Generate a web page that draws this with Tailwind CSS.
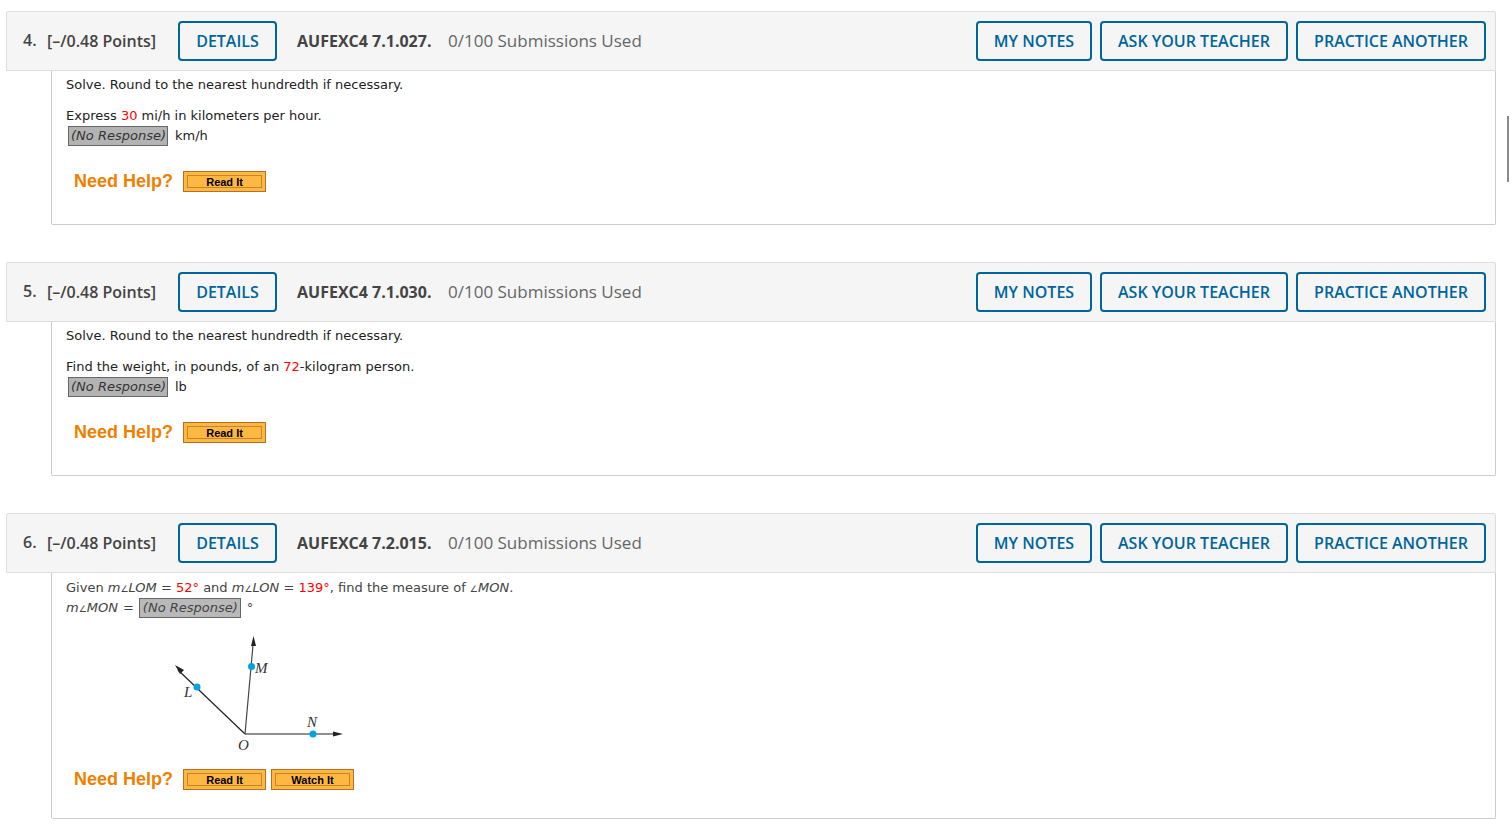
<!DOCTYPE html>
<html lang="en">
<head>
  <meta charset="UTF-8" />
  <meta name="viewport" content="width=device-width, initial-scale=1" />
  <title>Assignment</title>
  <script src="https://cdn.jsdelivr.net/npm/@tailwindcss/browser@4"></script>
</head>
<body class="bg-white h-[831px] overflow-hidden relative font-['Open_Sans',sans-serif]">

  <!-- scrollbar thumb -->
  <div class="absolute left-[1507px] top-[116px] w-[2px] h-[66px] bg-[#8a8a8a]"></div>

  <main class="pt-[11px] pl-[6px] pr-[16px]">

    <!-- question 4 -->
    <section class="mb-[37px]">
      <header class="h-[60px] bg-[#f5f5f5] border border-[#dddddd] rounded-t-[2px] flex items-center pl-[16px] pr-[9px] text-[#444444]">
        <span class="w-[24px] text-[16px] font-semibold -mt-[2px]">4.</span>
        <span class="w-[131px] text-[16px] font-semibold">[–/0.48 Points]</span>
        <button class="h-[40px] w-[99px] border-2 border-[#00659c] rounded-[4px] text-[#00659c] text-[16px] font-semibold">DETAILS</button>
        <span class="ml-[20px] w-[151px] text-[16px] font-bold">AUFEXC4 7.1.027.</span>
        <span class="text-[17px] text-[#666666]">0/100 Submissions Used</span>
        <div class="ml-auto flex gap-[8px]">
          <button class="h-[40px] w-[116px] border-2 border-[#00659c] rounded-[4px] text-[#00659c] text-[16px] font-semibold">MY NOTES</button>
          <button class="h-[40px] w-[188px] border-2 border-[#00659c] rounded-[4px] text-[#00659c] text-[16px] font-semibold">ASK YOUR TEACHER</button>
          <button class="h-[40px] w-[190px] border-2 border-[#00659c] rounded-[4px] text-[#00659c] text-[16px] font-semibold">PRACTICE ANOTHER</button>
        </div>
      </header>
      <div class="ml-[45px] h-[154px] border-l border-r border-b border-[#cccccc] rounded-b-[2px] pl-[14px] font-['DejaVu_Sans',sans-serif] text-[13px] text-[#222222]">
        <p class="pt-[6px] leading-[16px]">Solve. Round to the nearest hundredth if necessary.</p>
        <p class="mt-[15px] leading-[16px]">Express <span class="text-[#ff0000]">30</span> mi/h in kilometers per hour.</p>
        <div class="mt-[2px] ml-[2px] flex items-center h-[20px]">
          <span class="h-[20px] w-[100px] bg-[#b3b3b3] border border-[#666666] italic text-[#333333] leading-[18px] pl-[2px]">(No Response)</span>
          <span class="ml-[7px]">km/h</span>
        </div>
        <div class="mt-[25px] ml-[8px] flex items-center h-[21px]">
          <span class="font-['Liberation_Sans',sans-serif] font-bold text-[18px] text-[#ee7f00]">Need Help?</span>
          <button class="ml-[10px] h-[21px] w-[83px] bg-[#fdb843] border border-[#b86f1f] p-[3px] flex">
            <span class="flex-1 border border-[#c98428] text-black font-['Liberation_Sans',sans-serif] font-bold text-[11px] leading-[12px]">Read It</span>
          </button>
        </div>
      </div>
    </section>

    <!-- question 5 -->
    <section class="mb-[37px]">
      <header class="h-[60px] bg-[#f5f5f5] border border-[#dddddd] rounded-t-[2px] flex items-center pl-[16px] pr-[9px] text-[#444444]">
        <span class="w-[24px] text-[16px] font-semibold -mt-[2px]">5.</span>
        <span class="w-[131px] text-[16px] font-semibold">[–/0.48 Points]</span>
        <button class="h-[40px] w-[99px] border-2 border-[#00659c] rounded-[4px] text-[#00659c] text-[16px] font-semibold">DETAILS</button>
        <span class="ml-[20px] w-[151px] text-[16px] font-bold">AUFEXC4 7.1.030.</span>
        <span class="text-[17px] text-[#666666]">0/100 Submissions Used</span>
        <div class="ml-auto flex gap-[8px]">
          <button class="h-[40px] w-[116px] border-2 border-[#00659c] rounded-[4px] text-[#00659c] text-[16px] font-semibold">MY NOTES</button>
          <button class="h-[40px] w-[188px] border-2 border-[#00659c] rounded-[4px] text-[#00659c] text-[16px] font-semibold">ASK YOUR TEACHER</button>
          <button class="h-[40px] w-[190px] border-2 border-[#00659c] rounded-[4px] text-[#00659c] text-[16px] font-semibold">PRACTICE ANOTHER</button>
        </div>
      </header>
      <div class="ml-[45px] h-[154px] border-l border-r border-b border-[#cccccc] rounded-b-[2px] pl-[14px] font-['DejaVu_Sans',sans-serif] text-[13px] text-[#222222]">
        <p class="pt-[6px] leading-[16px]">Solve. Round to the nearest hundredth if necessary.</p>
        <p class="mt-[15px] leading-[16px]">Find the weight, in pounds, of an <span class="text-[#ff0000]">72</span>-kilogram person.</p>
        <div class="mt-[2px] ml-[2px] flex items-center h-[20px]">
          <span class="h-[20px] w-[100px] bg-[#b3b3b3] border border-[#666666] italic text-[#333333] leading-[18px] pl-[2px]">(No Response)</span>
          <span class="ml-[7px]">lb</span>
        </div>
        <div class="mt-[25px] ml-[8px] flex items-center h-[21px]">
          <span class="font-['Liberation_Sans',sans-serif] font-bold text-[18px] text-[#ee7f00]">Need Help?</span>
          <button class="ml-[10px] h-[21px] w-[83px] bg-[#fdb843] border border-[#b86f1f] p-[3px] flex">
            <span class="flex-1 border border-[#c98428] text-black font-['Liberation_Sans',sans-serif] font-bold text-[11px] leading-[12px]">Read It</span>
          </button>
        </div>
      </div>
    </section>

    <!-- question 6 -->
    <section>
      <header class="h-[60px] bg-[#f5f5f5] border border-[#dddddd] rounded-t-[2px] flex items-center pl-[16px] pr-[9px] text-[#444444]">
        <span class="w-[24px] text-[16px] font-semibold -mt-[2px]">6.</span>
        <span class="w-[131px] text-[16px] font-semibold">[–/0.48 Points]</span>
        <button class="h-[40px] w-[99px] border-2 border-[#00659c] rounded-[4px] text-[#00659c] text-[16px] font-semibold">DETAILS</button>
        <span class="ml-[20px] w-[151px] text-[16px] font-bold">AUFEXC4 7.2.015.</span>
        <span class="text-[17px] text-[#666666]">0/100 Submissions Used</span>
        <div class="ml-auto flex gap-[8px]">
          <button class="h-[40px] w-[116px] border-2 border-[#00659c] rounded-[4px] text-[#00659c] text-[16px] font-semibold">MY NOTES</button>
          <button class="h-[40px] w-[188px] border-2 border-[#00659c] rounded-[4px] text-[#00659c] text-[16px] font-semibold">ASK YOUR TEACHER</button>
          <button class="h-[40px] w-[190px] border-2 border-[#00659c] rounded-[4px] text-[#00659c] text-[16px] font-semibold">PRACTICE ANOTHER</button>
        </div>
      </header>
      <div class="ml-[45px] h-[246px] border-l border-r border-b border-[#cccccc] rounded-b-[2px] pl-[14px] font-['DejaVu_Sans',sans-serif] text-[13px] text-[#444444]">
        <p class="pt-[7px] leading-[16px]">Given <i>m<span class="text-[9px]">∠</span>LOM</i> = <span class="text-[#ff0000]">52°</span> and <i>m<span class="text-[9px]">∠</span>LON</i> = <span class="text-[#ff0000]">139°</span>, find the measure of <i><span class="text-[9px]">∠</span>MON</i>.</p>
        <div class="mt-[1px] flex items-center h-[20px]">
          <i>m<span class="text-[9px]">∠</span>MON</i>
          <span class="ml-[5px]">=</span>
          <span class="ml-[5px] h-[20px] w-[102px] bg-[#b9b9b9] border border-[#666666] italic leading-[18px] pl-[3px]">(No Response)</span>
          <span class="ml-[6px]">°</span>
        </div>
        <svg class="block mt-[13px] ml-[100px]" width="190" height="125" viewBox="0 0 190 125">
          <g stroke="#222222" stroke-width="1.2" fill="#222222">
            <line x1="79" y1="103" x2="12" y2="39" />
            <polygon stroke="none" points="9,34 18,39 14,43" />
            <line x1="79" y1="103" x2="87" y2="14" stroke="#444444" />
            <polygon stroke="none" points="87.500,5 90,15 85,15" />
            <line x1="79" y1="103" x2="168" y2="103" />
            <polygon stroke="none" points="177,103 167,100.500 167,105.500" />
          </g>
          <g fill="#00a3e0">
            <circle cx="31" cy="56" r="3.500" />
            <circle cx="85.500" cy="35.500" r="3.500" />
            <circle cx="147" cy="103" r="3.500" />
          </g>
          <g fill="#333333" font-family="Liberation Serif, serif" font-style="italic" font-size="15">
            <text x="18" y="66">L</text>
            <text x="89" y="42">M</text>
            <text x="141" y="96">N</text>
            <text x="72" y="119">O</text>
          </g>
        </svg>
        <div class="mt-[13px] ml-[8px] flex items-center h-[21px]">
          <span class="font-['Liberation_Sans',sans-serif] font-bold text-[18px] text-[#ee7f00]">Need Help?</span>
          <button class="ml-[10px] h-[21px] w-[83px] bg-[#fdb843] border border-[#b86f1f] p-[3px] flex">
            <span class="flex-1 border border-[#c98428] text-black font-['Liberation_Sans',sans-serif] font-bold text-[11px] leading-[12px]">Read It</span>
          </button>
          <button class="ml-[5px] h-[21px] w-[83px] bg-[#fdb843] border border-[#b86f1f] p-[3px] flex">
            <span class="flex-1 border border-[#c98428] text-black font-['Liberation_Sans',sans-serif] font-bold text-[11px] leading-[12px]">Watch It</span>
          </button>
        </div>
      </div>
    </section>

  </main>
</body>
</html>
